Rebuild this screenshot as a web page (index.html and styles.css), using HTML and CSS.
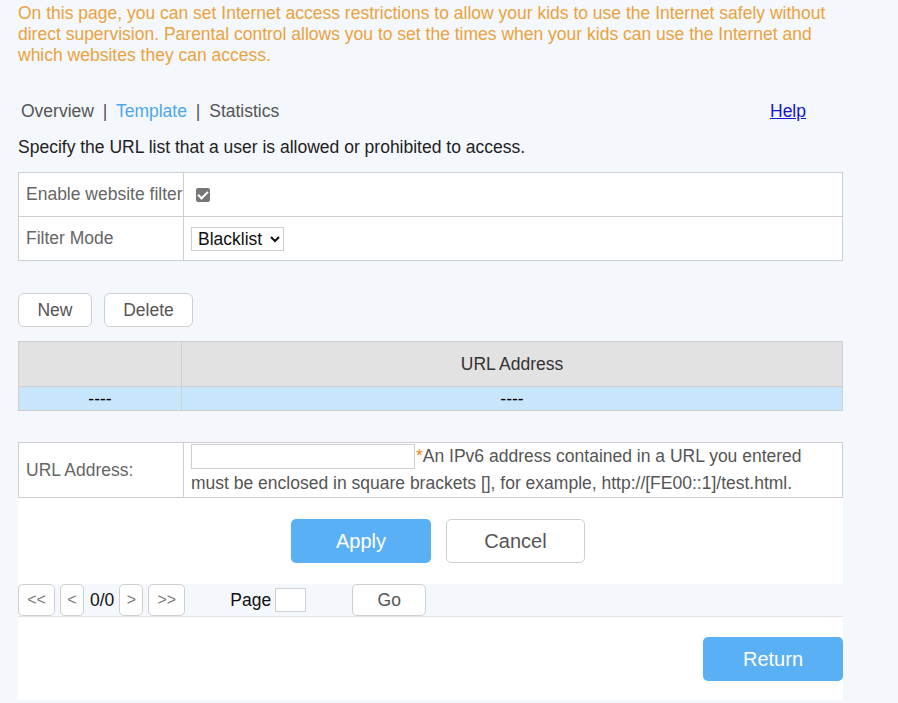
FILE: index.html
```html
<!DOCTYPE html>
<html lang="en">

<head>
    <meta charset="UTF-8">
    <title>Parental Control</title>
    <link rel="stylesheet" href="styles.css">
</head>

<body>
    <div class="page">
        <p class="intro">On this page, you can set Internet access restrictions to allow your kids to use the Internet safely without direct supervision. Parental control allows you to set the times when your kids can use the Internet and which websites they can access.</p>

        <div class="nav-bar">
            <div class="tabs">
                <span class="tab">Overview</span>
                <span class="sep">|</span>
                <span class="tab active">Template</span>
                <span class="sep">|</span>
                <span class="tab">Statistics</span>
            </div>
            <a class="help" href="#">Help</a>
        </div>

        <p class="hint">Specify the URL list that a user is allowed or prohibited to access.</p>

        <table class="form-table">
            <tr>
                <td class="label">Enable website filter</td>
                <td class="value"><span class="check"></span></td>
            </tr>
            <tr>
                <td class="label">Filter Mode</td>
                <td class="value">
                    <select class="mode">
                        <option>Blacklist</option>
                        <option>Whitelist</option>
                    </select>
                </td>
            </tr>
        </table>

        <div class="toolbar">
            <button class="btn btn-new">New</button>
            <button class="btn btn-del">Delete</button>
        </div>

        <table class="list-table">
            <tr class="head">
                <th class="first"></th>
                <th>URL Address</th>
            </tr>
            <tr class="row">
                <td class="first">----</td>
                <td>----</td>
            </tr>
        </table>

        <table class="form-table url-table">
            <tr>
                <td class="label">URL Address:</td>
                <td class="value note-cell">
                    <input class="url-input" type="text"><span class="star">*</span>An IPv6 address contained in a URL you entered must be enclosed in square brackets [], for example, http://[FE00::1]/test.html.
                </td>
            </tr>
        </table>

        <div class="panel">
            <div class="actions">
                <button class="btn-main">Apply</button>
                <button class="btn-plain">Cancel</button>
            </div>

            <div class="pager">
                <button class="pg-btn wide">&lt;&lt;</button>
                <button class="pg-btn">&lt;</button>
                <span class="count">0/0</span>
                <button class="pg-btn">&gt;</button>
                <button class="pg-btn wide">&gt;&gt;</button>
                <span class="page-label">Page</span>
                <input class="page-input" type="text">
                <button class="go-btn">Go</button>
            </div>

            <div class="footer">
                <button class="btn-main">Return</button>
            </div>
        </div>
    </div>
</body>

</html>
```

FILE: styles.css
```css
body {
    background: #f4f7fb;
    color: #333;
    font-family: "Liberation Sans", Arial, sans-serif;
    font-size: 17.5px;
    margin: 0;
}

.page {
    width: 825px;
    padding-left: 18px;
}

.intro {
    margin: 0;
    padding-top: 3px;
    line-height: 21px;
    color: #eaa33c;
}

.nav-bar {
    display: flex;
    justify-content: space-between;
    align-items: center;
    height: 24px;
    margin-top: 33px;
    padding-left: 3px;
}

.tabs .tab {
    color: #555;
}

.tabs .active {
    color: #4ca7ea;
}

.tabs .sep {
    color: #555;
    margin: 0 4px;
}

.help {
    color: #1515d0;
    margin-right: 37px;
}

.hint {
    margin: 13px 0 0;
    height: 22px;
    line-height: 22px;
    color: #222;
}

/* form tables */
.form-table {
    width: 825px;
    margin-top: 14px;
    border-collapse: collapse;
    background: #fff;
}

.form-table td {
    border: 1px solid #cfcfcf;
    height: 43px;
    padding: 0;
}

.form-table .label {
    width: 157px;
    padding-left: 7px;
    color: #666;
    white-space: nowrap;
}

.form-table .value {
    padding-left: 7px;
}

/* disabled checked box, grey */
.check {
    display: inline-block;
    position: relative;
    width: 14px;
    height: 14px;
    margin-left: 5px;
    border-radius: 2px;
    background: #777;
    vertical-align: middle;
}

.check::after {
    content: "";
    position: absolute;
    left: 4px;
    top: 1px;
    width: 4px;
    height: 8px;
    border: solid #fff;
    border-width: 0 2px 2px 0;
    transform: rotate(45deg);
}

.mode {
    font-family: "Liberation Sans", Arial, sans-serif;
    font-size: 17.5px;
    color: #111;
    height: 24px;
    padding: 0 2px;
    border: 1px solid #cfcfcf;
    border-radius: 0;
    background: #fff;
}

.toolbar {
    display: flex;
    gap: 12px;
    margin-top: 32px;
}

.btn {
    height: 34px;
    padding: 0;
    border: 1px solid #cfcfcf;
    border-radius: 6px;
    background: #fff;
    color: #555;
    font-family: inherit;
    font-size: 17.5px;
}

.btn-new {
    width: 74px;
}

.btn-del {
    width: 89px;
}

/* url list */
.list-table {
    width: 825px;
    margin-top: 14px;
    border-collapse: collapse;
}

.list-table th,
.list-table td {
    border: 1px solid #cfcfcf;
    padding: 0;
    text-align: center;
}

.list-table .first {
    width: 162px;
}

.list-table .head th {
    height: 44px;
    background: #e2e2e2;
    font-weight: normal;
    color: #333;
}

.list-table .row td {
    height: 23px;
    background: #c7e6fb;
    color: #000;
    font-size: 17.5px;
    line-height: 20px;
}

.url-table {
    margin-top: 31px;
}

.url-table td {
    height: 51px;
}

.note-cell {
    color: #555;
    line-height: 27px;
}

.url-input {
    width: 224px;
    height: 25px;
    box-sizing: border-box;
    border: 1px solid #cfcfcf;
    margin: 1px 1px 0 0;
    vertical-align: top;
}

.star {
    color: #e08a2c;
}

/* bottom panel */
.panel {
    background: #fff;
    padding: 21px 0 19px;
}

.actions {
    display: flex;
    gap: 15px;
    padding-left: 273px;
}

.btn-main {
    width: 140px;
    height: 44px;
    border: none;
    border-radius: 5px;
    background: #5ab0f4;
    color: #fff;
    font-family: inherit;
    font-size: 20px;
}

.btn-plain {
    width: 139px;
    height: 44px;
    border: 1px solid #cfcfcf;
    border-radius: 5px;
    background: #fff;
    color: #555;
    font-family: inherit;
    font-size: 20px;
}

.pager {
    display: flex;
    align-items: center;
    height: 32px;
    margin-top: 21px;
    background: #f4f7fb;
    border-bottom: 1px solid #e4e4e4;
}

.pg-btn {
    width: 24px;
    height: 32px;
    padding: 0;
    margin-right: 5px;
    border: 1px solid #cfcfcf;
    border-radius: 5px;
    background: #fff;
    color: #777;
    font-family: inherit;
    font-size: 16px;
}

.pg-btn.wide {
    width: 37px;
}

.count {
    color: #111;
    margin: 0 5px 0 1px;
}

.page-label {
    color: #111;
    margin-left: 40px;
}

.page-input {
    width: 31px;
    height: 24px;
    box-sizing: border-box;
    margin: 0 0 0 4px;
    border: 1px solid #cfcfcf;
}

.go-btn {
    width: 74px;
    height: 32px;
    margin-left: 46px;
    border: 1px solid #cfcfcf;
    border-radius: 5px;
    background: #fff;
    color: #555;
    font-family: inherit;
    font-size: 17.5px;
}

.footer {
    display: flex;
    justify-content: flex-end;
    margin-top: 20px;
}
```
